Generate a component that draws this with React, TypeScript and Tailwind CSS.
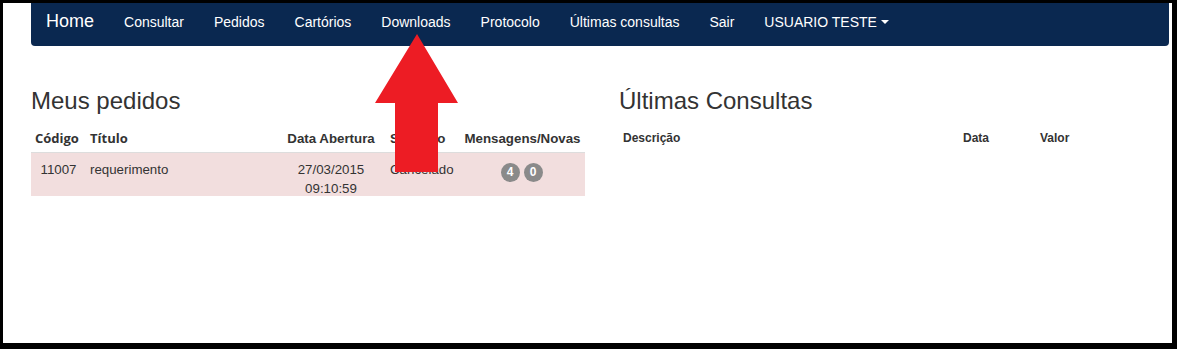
import React from "react";

const navLinks = ["Consultar", "Pedidos", "Cartórios", "Downloads", "Protocolo", "Últimas consultas", "Sair"];

function Badge({ n }: { n: number }) {
    return (
        <span className="w-[19px] h-[19px] rounded-full bg-[#8a8a8a] text-white text-[12px] font-bold leading-[19px] text-center">
            {n}
        </span>
    );
}

export default function App() {
    return (
        <div className="relative w-[1177px] h-[349px] overflow-hidden bg-white border-black border-t-[3px] border-l-[3px] border-r-[5px] border-b-[6px] font-['Liberation_Sans',Arial,sans-serif] text-[#333]">
            <nav className="ml-[28px] mr-[3px] h-[43px] bg-[#0a2850] rounded-b-[4px] flex items-baseline pt-[7.5px] text-white">
                <a className="px-[15px] text-[18px] leading-[20px]">Home</a>
                {navLinks.map((l) => (
                    <a key={l} className="px-[15px] text-[14px] leading-[20px]">{l}</a>
                ))}
                <a className="px-[15px] text-[14px] leading-[20px] flex items-center">
                    USUARIO TESTE
                    <span className="ml-[4px] w-0 h-0 border-t-[4px] border-t-white border-x-[4px] border-x-transparent" />
                </a>
            </nav>

            <div className="grid grid-cols-[554px_553px] gap-[34px] pl-[28px] mt-[42px]">
                <div>
                    <h3 className="text-[24px] leading-[26px] font-normal">Meus pedidos</h3>
                    <div className="mt-[15px] text-[13.3px] leading-[19px]">
                        <div className="grid grid-cols-[55px_196px_98px_80px_125px] font-bold border-b border-[#ddd] pb-[4px]">
                            <div className="pl-[4px] font-['Open_Sans',sans-serif] text-[13px]">Código</div>
                            <div className="pl-[4px] font-['Open_Sans',sans-serif] text-[13px]">Título</div>
                            <div className="text-center">Data Abertura</div>
                            <div className="pl-[10px]">Situação</div>
                            <div className="text-center">Mensagens/Novas</div>
                        </div>
                        <div className="grid grid-cols-[55px_196px_98px_80px_125px] bg-[#f2dede] h-[43px] pt-[7px]">
                            <div className="text-center">11007</div>
                            <div className="pl-[4px]">requerimento</div>
                            <div className="text-center">27/03/2015<br />09:10:59</div>
                            <div className="pl-[10px]">Cancelado</div>
                            <div className="flex justify-center gap-[4px] pt-[3px] pr-[2px]">
                                <Badge n={4} />
                                <Badge n={0} />
                            </div>
                        </div>
                    </div>
                </div>

                <div>
                    <h3 className="text-[24px] leading-[26px] font-normal">Últimas Consultas</h3>
                    <div className="mt-[15px] grid grid-cols-[344px_77px_1fr] text-[12px] leading-[19px] font-bold">
                        <div className="pl-[4px]">Descrição</div>
                        <div>Data</div>
                        <div>Valor</div>
                    </div>
                </div>
            </div>

            <svg className="absolute left-[-3px] top-[-3px] w-[1177px] h-[349px] pointer-events-none" viewBox="0 0 1177 349">
                <polygon points="417,34 458,103 438,103 438,172 395,172 395,103 375,103" fill="#ed1c24" />
            </svg>
        </div>
    );
}
